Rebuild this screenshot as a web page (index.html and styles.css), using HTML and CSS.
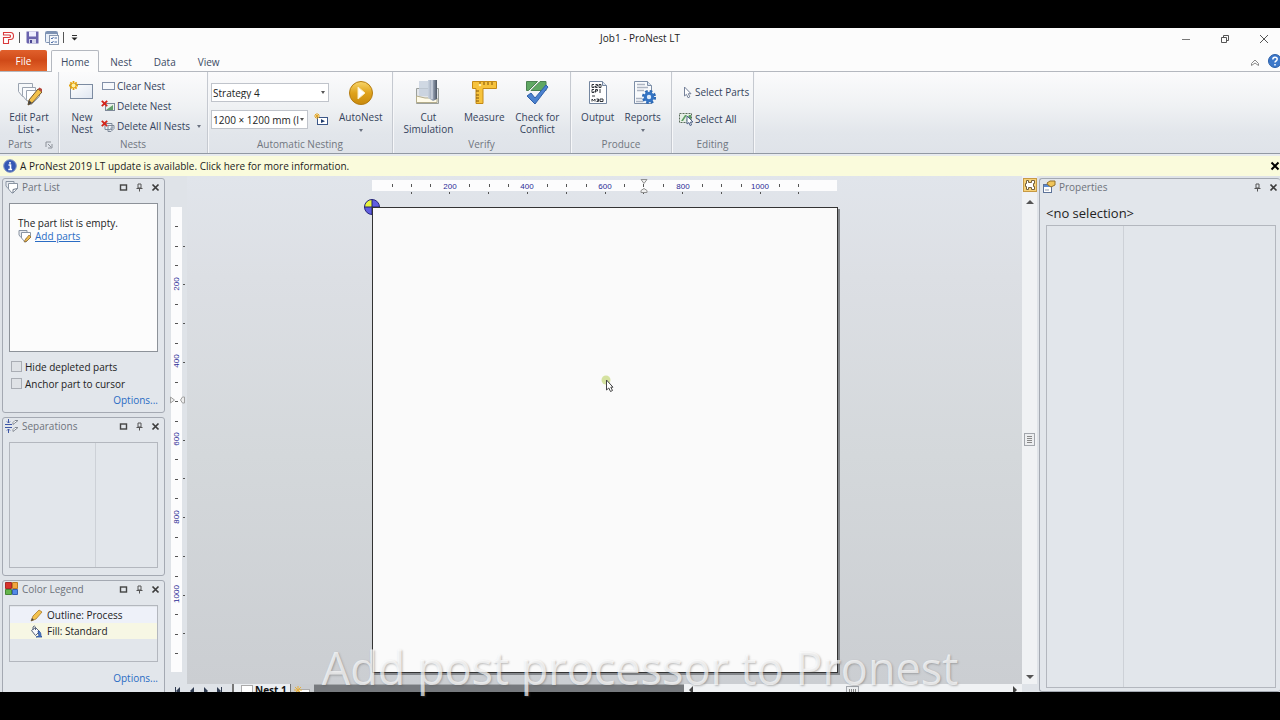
FILE: index.html
```html
<!DOCTYPE html>
<html lang="en">
<head>
<meta charset="utf-8">
<title>Job1 - ProNest LT</title>
<link rel="stylesheet" href="styles.css">
</head>
<body>
<svg class="defs" width="0" height="0" aria-hidden="true">
  <defs>
    <linearGradient id="gold" x1="0" y1="0" x2="0" y2="1"><stop offset="0" stop-color="#f8d66a"/><stop offset=".5" stop-color="#dfa21c"/><stop offset="1" stop-color="#c98a0c"/></linearGradient>
    <linearGradient id="steel" x1="0" y1="0" x2="1" y2="0"><stop offset="0" stop-color="#c9d3e0"/><stop offset=".6" stop-color="#8e99ab"/><stop offset="1" stop-color="#4b5563"/></linearGradient>
    <linearGradient id="paper" x1="0" y1="0" x2="1" y2="1"><stop offset="0" stop-color="#fff"/><stop offset="1" stop-color="#dfe6f1"/></linearGradient>
    <symbol id="win" viewBox="0 0 9 9"><rect x="1.500" y="2" width="6" height="5" fill="none" stroke="#444" stroke-width="1.400"/></symbol>
    <symbol id="pin" viewBox="0 0 9 9"><path d="M3 1h3v4H3zM1.500 5.500h6M4.500 5.500v3" fill="none" stroke="#555"/></symbol>
    <symbol id="close" viewBox="0 0 9 9"><path d="M1.500 1.500l6 6M7.500 1.500l-6 6" stroke="#3c3c3c" stroke-width="1.700"/></symbol>
    <symbol id="pages" viewBox="0 0 14 14"><path d="M1 1.500h8v7H3L1 6z" fill="#e8ebf0" stroke="#8a95a3"/><path d="M3.500 3.500h9v5L8 13H7L3.500 9z" fill="#fff" stroke="#8a95a3"/><path d="M8 13V9.500l4.500-1" fill="none" stroke="#6f7b8b"/></symbol>
    <symbol id="redx" viewBox="0 0 6 6"><path d="M.7.7l4.600 4.600M5.300.7L.7 5.300" stroke="#d2271d" stroke-width="1.600"/></symbol>
  </defs>
</svg>
<div class="app">
  <header class="titlebar">
    <div class="quick">
      <svg width="13" height="14" viewBox="0 0 13 14"><path d="M1.500 1.500h7q3 0 3 3.500t-3 3.500h-2v4h-5v-6h5.500q1.500 0 1.500-1.300T7 4H1.500z" fill="#fff" stroke="#d9393b" stroke-width="1.100"/></svg>
      <i class="bar"></i>
      <button type="button" aria-label="Save"><svg width="13" height="13" viewBox="0 0 13 13"><path d="M.5.500h12v12h-11l-1-1z" fill="#6a63ad"/><path d="M3 .5h7v5H3z" fill="#eef"/><path d="M3 8h7v4.500H3z" fill="#d5d5ea"/><path d="M4 9h2v3H4z" fill="#4a4591"/></svg></button>
      <button type="button" aria-label="Job settings"><svg width="14" height="14" viewBox="0 0 14 14"><rect x=".5" y=".5" width="12" height="11" rx="1" fill="#e9eff8" stroke="#7d92b3"/><path d="M1 2h11" stroke="#7d92b3" stroke-width="2"/><rect x="4.500" y="4.500" width="9" height="9" fill="#f7f9fc" stroke="#8a99b0"/><path d="M6 7l1 1 1.500-2M9.500 7H12M6 11l1 1 1.500-2M9.500 11H12" fill="none" stroke="#4d6ea8"/></svg></button>
      <i class="bar"></i>
      <button type="button" aria-label="Customize toolbar"><svg width="9" height="9" viewBox="0 0 9 9"><path d="M2 2.500h5" stroke="#333"/><path d="M1.500 4.500h6l-3 3z" fill="#222"/></svg></button>
    </div>
    <h1>Job1 - ProNest LT</h1>
    <div class="wincontrols">
      <button type="button" aria-label="Minimize"><svg width="10" height="10"><path d="M1 5.500h8" stroke="#777"/></svg></button>
      <button type="button" aria-label="Restore"><svg width="10" height="10"><path d="M1.500 3.500h5v5h-5zM3.500 3V1.500h5v5H7" fill="none" stroke="#555"/></svg></button>
      <button type="button" aria-label="Close"><svg width="10" height="10"><path d="M1 1l8 8M9 1L1 9" stroke="#555"/></svg></button>
    </div>
  </header>

  <nav class="tabs">
    <button type="button" class="file">File</button>
    <button type="button" class="tab active">Home</button>
    <button type="button" class="tab">Nest</button>
    <button type="button" class="tab">Data</button>
    <button type="button" class="tab">View</button>
    <span class="fill"></span>
    <button type="button" aria-label="Collapse ribbon"><svg width="10" height="10" viewBox="0 0 10 10"><path d="M1.500 5.500L5 2l3.500 3.500v2L5 5 1.500 7.500z" fill="#fff" stroke="#888"/></svg></button>
    <button type="button" class="help" aria-label="Help"><svg width="14" height="14" viewBox="0 0 14 14"><circle cx="7" cy="7" r="6.500" fill="#3d78c9" stroke="#2c5fa8"/><path d="M4.800 5.500q0-2.300 2.200-2.300t2.200 1.900q0 1.200-1.200 1.900-1 .5-1 1.600M7 10v1.500" fill="none" stroke="#fff" stroke-width="1.500"/></svg></button>
  </nav>

  <section class="ribbon" aria-label="Home ribbon">
    <div class="group g-parts">
      <div class="tools">
        <button type="button" class="big"><svg width="26" height="28" viewBox="0 0 26 28"><path d="M2.500 5.500h14v9h-9l-1 4-4-5z" fill="#f6f8fa" stroke="#9aa3b0"/><path d="M6.500 9.500h13v9h-8l-1 4-4-5z" fill="#fafbfd" stroke="#9aa3b0"/><path d="M10.500 12.500h13v6l-8 8h-1l-4-5z" fill="#fff" stroke="#9aa3b0"/><path d="M13 22L22 11l4 3-10 11-4 2z" fill="#f2c14b" stroke="#75582b"/><path d="M22 11l1.500-1.500L26 11v3z" fill="#b5473c"/><path d="M13 22l3 3-4 2z" fill="#444"/></svg><span>Edit Part<br>List <i class="caret"></i></span></button>
      </div>
      <div class="caption">Parts<svg class="launch" width="8" height="8"><path d="M1 6V1h5M3 3l3 3M7 3v4H3" fill="none" stroke="#8c9199"/></svg></div>
    </div>
    <div class="group g-nests">
      <div class="tools">
        <button type="button" class="big"><svg width="26" height="28" viewBox="0 0 26 28"><rect x="1.500" y="6.500" width="22" height="14" fill="url(#paper)" stroke="#7c8ba1"/><path d="M4.500 3v9M0 7.500h9M1.300 4.300l6.400 6.400M7.700 4.300l-6.400 6.400" stroke="#e5a30e" stroke-width="1.800"/><circle cx="4.500" cy="7.500" r="2" fill="#fff2a8"/></svg><span>New<br>Nest</span></button>
        <div class="stack">
          <button type="button" class="row"><svg width="14" height="12"><rect x="1.500" y="2.500" width="12" height="7" fill="#f7f9fc" stroke="#8290a8"/></svg>Clear Nest</button>
          <button type="button" class="row"><svg width="14" height="12" viewBox="0 0 14 12"><rect x="4.500" y="3.500" width="9" height="7" fill="#eaf1ea" stroke="#7d8898"/><path d="M5 10l7-5v5z" fill="#63a06b"/><use href="#redx" x="0" y="0" width="7" height="7"/></svg>Delete Nest</button>
          <button type="button" class="row"><svg width="14" height="12" viewBox="0 0 14 12"><path d="M4 3.500h7v6H4zM7 5.500h6v3l-3 3H7z" fill="#eceff4" stroke="#7d8898"/><path d="M8 11l2-4h3z" fill="#9aa6b7"/><use href="#redx" x="0" y="0" width="7" height="7"/></svg>Delete All Nests<i class="caret far"></i></button>
        </div>
      </div>
      <div class="caption">Nests</div>
    </div>
    <div class="group g-auto">
      <div class="tools">
        <div class="combos">
          <label class="combo wide"><select aria-label="Strategy"><option>Strategy 4</option></select></label>
          <div class="comborow">
            <label class="combo"><select aria-label="Plate size"><option>1200 × 1200 mm (I</option></select></label>
            <button type="button" aria-label="New plate"><svg width="14" height="14" viewBox="0 0 14 14"><rect x="3.500" y="4.500" width="10" height="7" fill="#fff" stroke="#3c5788"/><path d="M7 6l4 2.200L7 10z" fill="#233e70"/><path d="M3 0v6M0 3h6M1 1l4 4M5 1L1 5" stroke="#e5a622"/></svg></button>
          </div>
        </div>
        <button type="button" class="big"><svg width="26" height="28" viewBox="0 0 26 28"><circle cx="13" cy="15" r="11.500" fill="url(#gold)" stroke="#b47c12"/><path d="M10 9l7 6-7 6z" fill="#fff" stroke="#fbecc0"/></svg><span>AutoNest<br><i class="caret"></i></span></button>
      </div>
      <div class="caption">Automatic Nesting</div>
    </div>
    <div class="group g-verify">
      <div class="tools">
        <button type="button" class="big"><svg width="26" height="28" viewBox="0 0 26 28"><path d="M1.500 10.500h22v15h-22z" fill="#e2e5e9" stroke="#9a9f9b"/><path d="M1.500 18v6.500H22V20H10z" fill="#fffbe9" stroke="#b4ad8b"/><path d="M4 3h11v15H4z" fill="#c5cfdd" opacity=".8"/><path d="M13 2h9v19l-4 2-5-3z" fill="url(#steel)"/><path d="M17 2v19" stroke="#e6ebf2"/></svg><span>Cut<br>Simulation</span></button>
        <button type="button" class="big"><svg width="26" height="28" viewBox="0 0 26 28"><path d="M1.500 3.500h24v7H12v15H5v-15H1.500z" fill="#f7c33c" stroke="#c58a14"/><path d="M9 4v3M13 4v3M17 4v3M21 4v3M5 13h3M5 17h3M5 20h3M5 23h3" stroke="#80550b"/><circle cx="9" cy="7" r="1.300" fill="#fff0ae"/></svg><span>Measure</span></button>
        <button type="button" class="big"><svg width="26" height="28" viewBox="0 0 26 28"><path d="M2.500 3.500h11l-9 9h-2zM16 3.500h6v9H7z" fill="#5fa763" stroke="#4a8150"/><path d="M3 18l4-3 4 5L22 7l2 2-13 17z" fill="#4b82cf" stroke="#2f5fa9"/></svg><span>Check for<br>Conflict</span></button>
      </div>
      <div class="caption">Verify</div>
    </div>
    <div class="group g-produce">
      <div class="tools">
        <button type="button" class="big"><svg width="26" height="28" viewBox="0 0 26 28"><path d="M4.500 3.500h13l4 4v18h-17z" fill="#fff" stroke="#74869f"/><path d="M17.500 3.500v4h4" fill="#d9e2ee" stroke="#74869f"/><path d="M9 6.500H7v3h2V8M10.500 6.500h2V8h-2v1.500h2M14 6.500h2v3h-2zM9 11.500H7v3h2V13M10.500 14.500v-3h2V13h-2M15 11v4M7 18h3M7 23.500V21l1.500 1.500L10 21v2.500M11.500 21h2v2.500h-2M12 22.200h1.500M15 21h3v2.500h-3z" fill="none" stroke="#30343a"/></svg><span>Output</span></button>
        <button type="button" class="big"><svg width="26" height="28" viewBox="0 0 26 28"><path d="M4.500 3.500h13l4 4v18h-17z" fill="#f8fafc" stroke="#7d8ea7"/><path d="M17.500 3.500v4h4" fill="#d9e2ee" stroke="#7d8ea7"/><path d="M7 6.500h8M7 9.500h11M7 12.500h7M6 20.500h6M6 23.500h7" stroke="#adb5c2" stroke-width="1.500"/><circle cx="19" cy="19" r="5.800" fill="none" stroke="#2c69b5" stroke-width="2.600" stroke-dasharray="2.600 1.955"/><circle cx="19" cy="19" r="3.700" fill="#dceafa" stroke="#3474c4" stroke-width="3"/></svg><span>Reports<br><i class="caret"></i></span></button>
      </div>
      <div class="caption">Produce</div>
    </div>
    <div class="group g-edit">
      <div class="tools stack">
        <button type="button" class="row"><svg width="14" height="14" viewBox="0 0 14 14"><path d="M5.500 2v9l2-1.700 1.500 3.400 1.800-.8-1.500-3.200h2.700z" fill="#fff" stroke="#76829a"/></svg>Select Parts</button>
        <button type="button" class="row"><svg width="14" height="14" viewBox="0 0 14 14"><rect x=".5" y="1.500" width="12" height="9" fill="#e6efe6" stroke="#5b6b5d" stroke-dasharray="2 1"/><path d="M2 9l4-6h2L4 9zM7 9l3-6h2v4z" fill="#5d9d63"/><path d="M8 4v8l2-1.500 1 3 1.500-.5-1-3H14z" fill="#fff" stroke="#52648a"/></svg>Select All</button>
      </div>
      <div class="caption">Editing</div>
    </div>
  </section>

  <div class="notice">
    <svg width="14" height="14" viewBox="0 0 14 14"><circle cx="7" cy="7" r="6.300" fill="#3558b5" stroke="#8296c4"/><path d="M7 3v1.800M5.500 6h2v4.500M5.300 10.500h3.800" fill="none" stroke="#fff" stroke-width="1.600"/></svg>
    <span>A ProNest 2019 LT update is available. Click here for more information.</span>
    <button type="button" aria-label="Dismiss"><svg width="10" height="10" viewBox="0 0 10 10"><path d="M1.500 1.500l7 7M8.500 1.500l-7 7" stroke="#000" stroke-width="2"/></svg></button>
  </div>

  <main class="workspace">
    <aside class="left">
      <section class="panel">
        <header><svg width="14" height="14"><use href="#pages"/></svg><h2>Part List</h2><button type="button" aria-label="Maximize"><svg width="9" height="9"><use href="#win"/></svg></button><button type="button" aria-label="Pin"><svg width="9" height="9"><use href="#pin"/></svg></button><button type="button" aria-label="Close"><svg width="9" height="9"><use href="#close"/></svg></button></header>
        <div class="well partlist">
          <p>The part list is empty.</p>
          <p class="add"><svg width="14" height="14" viewBox="0 0 14 14"><use href="#pages" width="14" height="14"/><path d="M7 11l4-5 2 2-4 4-3 1z" fill="#f0bd4c" stroke="#8a6630" stroke-width=".7"/></svg><a href="#">Add parts</a></p>
        </div>
        <label class="check"><input type="checkbox">Hide depleted parts</label>
        <label class="check"><input type="checkbox">Anchor part to cursor</label>
        <a class="options" href="#">Options...</a>
      </section>
      <section class="panel">
        <header><svg width="14" height="14" viewBox="0 0 14 14"><path d="M0 5.500h7M0 8.500h7M3.500 0v4M3.500 14v-4M2 2.500L3.500 4 5 2.500M2 11.500L3.500 10 5 11.500" fill="none" stroke="#3e57a6"/><path d="M8 5.500v-2l2-2h3zM8 12.500v-2l2-2h3z" fill="#fff" stroke="#858b94"/></svg><h2>Separations</h2><button type="button" aria-label="Maximize"><svg width="9" height="9"><use href="#win"/></svg></button><button type="button" aria-label="Pin"><svg width="9" height="9"><use href="#pin"/></svg></button><button type="button" aria-label="Close"><svg width="9" height="9"><use href="#close"/></svg></button></header>
        <div class="well split seps"><span></span><span></span></div>
      </section>
      <section class="panel last">
        <header><svg width="14" height="14" viewBox="0 0 14 14"><path d="M.5.500h6v6h-6z" fill="#d8322c" stroke="#a82a26"/><path d="M7.500.500h5v6h-5z" fill="#f2a640" stroke="#bd7a22"/><path d="M.5 7.500h6v5h-6z" fill="#65b44b" stroke="#458634"/><path d="M7.500 7.500h5v5h-5z" fill="#5288e6" stroke="#3660b0"/></svg><h2>Color Legend</h2><button type="button" aria-label="Maximize"><svg width="9" height="9"><use href="#win"/></svg></button><button type="button" aria-label="Pin"><svg width="9" height="9"><use href="#pin"/></svg></button><button type="button" aria-label="Close"><svg width="9" height="9"><use href="#close"/></svg></button></header>
        <ul class="well legend">
          <li><svg width="13" height="13" viewBox="0 0 13 13"><path d="M1 12l2-5 6-6 3 2-6 7z" fill="#f3c24f" stroke="#a97b2c" stroke-width=".8"/><path d="M1 12l1-3 2 2z" fill="#444"/></svg>Outline: Process</li>
          <li class="fillrow"><svg width="13" height="13" viewBox="0 0 13 13"><path d="M1.500 5.500l4-3 4 4-4 4z" fill="#fafbfd" stroke="#59657d"/><path d="M3 5V2q1.500-2 2.500 0v3" fill="none" stroke="#59657d"/><path d="M8 6q3 0 3 5l1 1H6l3-1z" fill="#4a78c9" stroke="#2b519a" stroke-width=".8"/></svg>Fill: Standard</li>
        </ul>
        <a class="options" href="#">Options...</a>
      </section>
    </aside>

    <section class="stage">
      <div class="vruler">
        <svg width="22" height="466" viewBox="0 0 22 466">
          <path d="M6 0h11v465H6z" fill="#fcfcfd"/>
          <path d="M10 19.500h3m-3 20h3m-3 19h3m-3 39h3m-3 19h3m-3 20h3m-3 39h3m-3 19h3m-3 20h3m-3 38h3m-3 20h3m-3 19h3m-3 39h3m-3 19h3m-3 20h3m-3 38h3m-3 20h3m-3 19h3" stroke="#555" fill="none"/>
          <path d="M18 39.500h2m-2 38h2m-2 39h2m-2 39h2m-2 39h2m-2 39h2m-2 38h2m-2 39h2m-2 39h2m-2 39h2m-2 38h2" stroke="#555" fill="none"/>
          <path d="M5.500 190v6l4-3zM19.500 190v6h-2l-2-3 2-3z" fill="#eee" stroke="#a0a0a0"/>
          <g class="scale" text-anchor="middle"><text transform="translate(14 77) rotate(-90)">200</text><text transform="translate(14 154) rotate(-90)">400</text><text transform="translate(14 232) rotate(-90)">600</text><text transform="translate(14 310) rotate(-90)">800</text><text transform="translate(14 387) rotate(-90)">1000</text></g>
        </svg>
      </div>
      <div class="canvas">
        <svg class="hruler" width="466" height="19" viewBox="0 0 466 19">
          <path d="M0 4h465v11H0z" fill="#fcfcfd"/>
          <path d="M20.500 8v3m19-3v3m19-3v3m39-3v3m20-3v3m19-3v3m39-3v3m19-3v3m20-3v3m38-3v3m19-3v3m20-3v3m39-3v3m19-3v3m20-3v3m38-3v3m19-3v3" stroke="#555" fill="none"/>
          <path d="M39.500 16v2m38-2v2m39-2v2m39-2v2m39-2v2m39-2v2m38-2v2m39-2v2m39-2v2m39-2v2m38-2v2" stroke="#555" fill="none"/>
          <path d="M269 3.500h6l-3 4zM269 16.500h6v-2l-3-2-3 2z" fill="#eee" stroke="#909090"/>
          <g class="scale" text-anchor="middle"><text x="78" y="13">200</text><text x="155" y="13">400</text><text x="233" y="13">600</text><text x="311" y="13">800</text><text x="388" y="13">1000</text></g>
        </svg>
        <div class="sheetbox">
          <svg class="origin" width="18" height="18" viewBox="0 0 18 18"><circle cx="9" cy="9" r="7.500" fill="#605ee0"/><path d="M9 9V1.500A7.500 7.500 0 0 0 1.500 9z" fill="#e9f53c"/><path d="M9 1v16M1 9h16" stroke="#22226a"/><circle cx="9" cy="9" r="7.500" fill="none" stroke="#28287c"/></svg>
          <div class="sheet"></div>
          <svg class="cursor" width="16" height="20" viewBox="0 0 16 20"><circle cx="6" cy="6" r="4.500" fill="#d5e2a0"/><path d="M6.500 6v10l2.300-2 1.700 3.500 2-1-1.700-3.300H13z" fill="#fff" stroke="#444"/></svg>
        </div>
      </div>
      <div class="vscroll">
        <button type="button" class="hot" aria-label="Fit view"><svg width="12" height="12" viewBox="0 0 12 12"><path d="M2.500 1.500h2v2h3v-2h3v3h-1v3h1v3h-3v-2h-3v2h-2v-3h-1v-3h1z" fill="#fff" stroke="#75613c"/></svg></button>
        <button type="button" aria-label="Scroll up"><svg width="8" height="6"><path d="M0 5l4-4 4 4z" fill="#555"/></svg></button>
        <div class="track"><i class="thumb"></i></div>
        <button type="button" aria-label="Scroll down"><svg width="8" height="6"><path d="M0 1l4 4 4-4z" fill="#555"/></svg></button>
      </div>
      <div class="sheettabs">
        <div class="nav"><svg width="48" height="12" viewBox="0 0 48 12"><path d="M1 2h1v8H1zM6 2v8L2 6zM20 2v8l-4-4zM30 2v8l4-4zM43 2v8l4-4zM47 2h1v8h-1z" fill="#2f3b50"/></svg></div>
        <button type="button" class="nesttab"><svg width="12" height="10"><rect x=".5" y=".5" width="11" height="9" fill="#fff" stroke="#aaa"/></svg>Nest 1</button>
        <button type="button" class="newtab" aria-label="New nest"><svg width="16" height="12"><rect x="4.500" y="3.500" width="11" height="8" fill="#fff" stroke="#aaa"/><path d="M4 0v8M0 4h8M1 1l6 6M7 1L1 7" stroke="#e8b03a"/></svg></button>
        <div class="dark"></div>
        <div class="hscroll"><svg width="6" height="8"><path d="M5 0v8L1 4z" fill="#444"/></svg><i class="thumb side"></i><svg width="6" height="8"><path d="M1 0v8l4-4z" fill="#444"/></svg></div>
      </div>
    </section>

    <aside class="right panel">
      <header><svg width="14" height="14" viewBox="0 0 14 14"><rect x="1.500" y="4.500" width="8" height="8" fill="#fff" stroke="#5d7398"/><path d="M2 6h7" stroke="#5c8ad0" stroke-width="2"/><path d="M3 10h4" stroke="#8d9ab0"/><path d="M5 3l3-2h5v4l-4 2-3-2z" fill="#f0c559" stroke="#94702a"/></svg><h2>Properties</h2><button type="button" aria-label="Pin"><svg width="9" height="9"><use href="#pin"/></svg></button><button type="button" aria-label="Close"><svg width="9" height="9"><use href="#close"/></svg></button></header>
      <p class="selection">&lt;no selection&gt;</p>
      <div class="well split props"><span></span><span></span></div>
    </aside>
  </main>
</div>
<p class="subtitle">Add post processor to Pronest</p>
</body>
</html>
```
FILE: styles.css
```css
* { box-sizing: border-box; }
html, body { height: 100%; margin: 0; }
body {
  background: #000;
  padding: 28px 0;
  overflow: hidden;
  position: relative;
  font: 10px/12px "Open Sans", "Noto Sans", sans-serif;
  color: #222;
}
.defs { position: absolute; }
button { font: inherit; color: inherit; border: 0; padding: 0; background: none; }
svg { display: block; flex: none; }
h1, h2, p, ul { margin: 0; padding: 0; font-size: inherit; font-weight: 400; }
a { color: #2a6cc4; }

.app { height: 100%; display: flex; flex-direction: column; overflow: hidden; background: #dfe3e8; }

.titlebar { display: grid; grid-template-columns: 1fr auto 1fr; align-items: center; height: 19px; background: #fcfcfc; flex: none; }
.titlebar h1 { color: #222; }
.quick { display: flex; align-items: center; gap: 6px; padding-left: 2px; }
.bar { width: 1px; height: 11px; background: #555; margin-left: -2px; }
.wincontrols { display: flex; justify-content: flex-end; gap: 29px; padding: 3px 11px 0 0; }

.tabs { display: flex; align-items: flex-end; height: 25px; background: #fcfcfc; border-bottom: 1px solid #b4b8bf; flex: none; color: #3b4a63; }
.tabs .file { width: 47px; height: 21px; margin-right: 4px; background: linear-gradient(#e0602c, #d04a18 50%, #e4662c); color: #fff; border-radius: 2px 2px 0 0; }
.tab { height: 20px; padding: 1px 11px 0; }
.tab.active { height: 22px; margin-bottom: -1px; background: #fcfcfc; border: 1px solid #b4b8bf; border-bottom: 0; border-radius: 2px 2px 0 0; padding: 0 9px; }
.fill { flex: 1; }
.tabs .help { margin-right: -2px; padding-left: 8px; }
.tabs > [aria-label] { padding-bottom: 3px; }

.ribbon { display: flex; height: 82px; flex: none; background: linear-gradient(#fbfbfc, #f0f2f4 40%, #e2e6eb 75%, #dfe3e9); border-bottom: 1px solid #9299a3; color: #35435c; }
.group { display: flex; flex-direction: column; border-right: 1px solid #c5c9d0; box-shadow: 1px 0 #f6f7f9; }
.tools { flex: 1; display: flex; justify-content: space-evenly; padding-top: 6px; }
.caption { position: relative; text-align: center; height: 15px; color: #707680; }
.launch { position: absolute; right: 5px; top: 3px; }
.g-parts { width: 59px; }
.g-parts .caption { padding-right: 18px; }
.g-nests { width: 149px; }
.g-auto { width: 185px; }
.g-verify { width: 178px; }
.g-produce { width: 101px; }
.g-edit { width: 82px; }
.big { display: flex; flex-direction: column; align-items: center; text-align: center; gap: 5px; }
.caret { display: inline-block; border: 2px solid transparent; border-top: 3px solid #6b7280; border-bottom: 0; vertical-align: middle; }
.caret.far { margin-left: 5px; }
.row { display: flex; align-items: center; gap: 2px; white-space: nowrap; text-align: left; }
.stack { display: flex; flex-direction: column; gap: 8px; }
.g-nests .stack { padding-top: 2px; }
.g-nests .tools { padding-left: 4px; }
.g-edit .tools { padding: 13px 0 0 7px; justify-content: flex-start; gap: 13px; }
.g-auto .tools { justify-content: flex-start; gap: 10px; padding-left: 3px; }
.combos { display: flex; flex-direction: column; gap: 8px; padding-top: 5px; }
.comborow { display: flex; align-items: center; gap: 6px; }
.combo { position: relative; display: block; width: 97px; height: 19px; }
.combo.wide { width: 118px; }
.combo::after { content: ""; position: absolute; right: 4px; top: 8px; border: 2px solid transparent; border-top: 3px solid #555; border-bottom: 0; }
.combo select { width: 100%; height: 100%; appearance: none; background: #fff; border: 1px solid #c0c4cb; border-radius: 0; font: inherit; color: #222; padding: 0 8px 0 1px; }

.notice { display: flex; align-items: center; gap: 3px; height: 22px; padding: 0 0 1px 3px; flex: none; background: #fafbdc; border-top: 2px solid #e8ebee; color: #1c1c1c; }
.notice button { margin-left: auto; }

.workspace { flex: 1; min-height: 0; display: flex; }
.left { width: 163px; margin: 2px 2px 0 2px; display: flex; flex-direction: column; gap: 4px; flex: none; min-height: 0; }
.panel { border: 1px solid #a4a9b2; border-radius: 3px; background: #e2e6eb; padding: 0 6px 6px; display: flex; flex-direction: column; flex: none; }
.panel header { display: flex; align-items: center; height: 16px; margin: 0 -4px 0 -4px; gap: 7px; }
.panel h2 { flex: 1; color: #6e737b; margin-left: -4px; }
.panel header button:last-child { margin-right: 2px; }
.well { border: 1px solid #b3b7be; list-style: none; }
.partlist { height: 149px; margin: 8px 0 6px; background: #fcfcfc; border-color: #8d9299; padding: 13px 8px; }
.partlist .add { display: flex; align-items: center; gap: 3px; }
.check { display: flex; align-items: center; height: 17px; gap: 3px; margin-left: 2px; }
.check input { appearance: none; width: 11px; height: 11px; margin: 0; border: 1px solid #a9adb4; background: #dfe2e6; }
.options { align-self: flex-end; text-decoration: none; margin-top: 2px; }
.split { display: flex; }
.split span:first-child { border-right: 1px solid #cdd1d7; }
.seps { height: 126px; margin: 8px 0 1px; }
.seps span:first-child { width: 86px; }
.legend { height: 57px; margin: 8px 0; padding-top: 1px; }
.legend li { display: flex; align-items: center; height: 16px; padding-left: 20px; gap: 4px; background: #eef1f9; }
.legend .fillrow { background: #f7f7e4; }
.last { flex: 1 0 130px; }

.stage { flex: 1; min-width: 0; display: grid; grid-template-columns: 20px 1fr 15px; grid-template-rows: minmax(0, 1fr) 8px; }
.vruler { padding-top: 31px; overflow: hidden; display: flex; justify-content: flex-end; }
.canvas { display: flex; flex-direction: column; align-items: center; overflow: hidden; background: linear-gradient(#e1e5eb, #dcdfe4 20%, #d4d8db 55%, #cbced2); }
.scale { font: 8px "Liberation Sans", Arial, sans-serif; fill: #2b2b96; }
.sheetbox { position: relative; margin-top: 12px; flex: none; }
.sheet { position: relative; width: 466px; height: 466px; background: #fafafa; border: 1px solid #333; box-shadow: 2px 2px #85888c; }
.origin { position: absolute; left: -9px; top: -9px; }
.cursor { position: absolute; left: 228px; top: 167px; }
.vscroll { display: flex; flex-direction: column; align-items: center; background: #f0f2f4; padding: 2px 0 4px; }
.hot { background: #f7d27a; border: 1px solid #c79a44; margin-bottom: 7px; }
.track { flex: 1; display: flex; align-items: center; }
.thumb { width: 11px; height: 13px; border: 1px solid #a2a6ac; background: repeating-linear-gradient(#888 0 1px, #eceef0 1px 2px) center / 5px 7px no-repeat, #eceef0; }
.thumb.side { width: 13px; background: repeating-linear-gradient(90deg, #888 0 1px, #eceef0 1px 2px) center / 7px 7px no-repeat, #eceef0; }
.sheettabs { grid-column: 1 / -1; display: flex; height: 8px; overflow: hidden; align-items: flex-start; background: #dfe3e8; }
.nav { width: 65px; padding: 1px 0 0 7px; }
.nesttab { display: flex; align-items: flex-start; gap: 2px; width: 58px; padding: 1px 0 0 7px; font-weight: 700; line-height: 10px; color: #111; background: #eceff2; border-left: 2px solid #777; white-space: nowrap; }
.newtab { width: 24px; height: 16px; padding-left: 3px; background: #c9ccd0; border-left: 1px solid #777; }
.dark { flex: 374; height: 8px; background: #777a7e; border-top: 1px solid #a5a8ab; }
.hscroll { flex: 334; display: flex; justify-content: space-between; background: #f0f2f4; height: 16px; margin-right: 15px; padding: 2px 4px; }

.right { width: 241px; margin: 2px 0 0 2px; border-right: 0; padding: 0 4px 3px 6px; }
.selection { font-size: 13px; line-height: 16px; padding: 10px 0 4px; }
.props { flex: 1; }
.props span:first-child { width: 77px; }

.subtitle {
  position: absolute;
  left: 0;
  right: 0;
  bottom: 28px;
  text-align: center;
  font-size: 45px;
  line-height: 48px;
  color: rgba(255, 255, 255, .7);
  text-shadow: 1px 1px 2px rgba(90, 90, 90, .4);
}
```
